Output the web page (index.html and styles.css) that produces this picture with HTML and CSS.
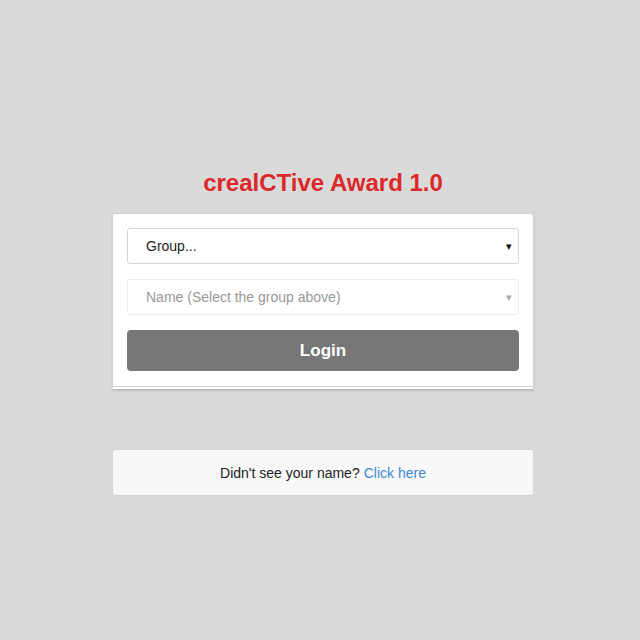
FILE: index.html
```html
<!DOCTYPE html>
<html>
<head>
<meta charset="utf-8">
<link rel="stylesheet" href="styles.css">
</head>
<body>
<div class="page">
  <h1 class="title">crealCTive Award 1.0</h1>
  <form class="card">
    <div class="fields">
      <div class="select">
        <span>Group...</span>
        <span class="arrow">&#9662;</span>
      </div>
      <div class="select disabled">
        <span>Name (Select the group above)</span>
        <span class="arrow">&#9662;</span>
      </div>
      <button type="button" class="login">Login</button>
    </div>
    <div class="card-foot"></div>
  </form>
  <div class="note">Didn't see your name? <a href="#">Click here</a></div>
</div>
</body>
</html>
```
FILE: styles.css
```css
html, body {
  margin: 0;
  padding: 0;
  background: #dadada;
  font-family: "Liberation Sans", Arial, sans-serif;
}
.page {
  width: 422px;
  margin-left: 112px;
  padding-top: 169px;
  display: flex;
  flex-direction: column;
}
.title {
  margin: 0 0 16px;
  text-align: center;
  color: #dc2828;
  font-size: 24px;
  line-height: 28px;
  font-weight: bold;
}
.card {
  background: #fff;
  border: 1px solid #d2d2d2;
  border-bottom: none;
  border-radius: 3px 3px 0 0;
  box-shadow: 0 2px 2px rgba(0,0,0,0.14);
}
.fields {
  padding: 14px 14px 15px;
  display: flex;
  flex-direction: column;
  gap: 15px;
}
.select {
  height: 36px;
  box-sizing: border-box;
  border: 1px solid #d6d6d6;
  border-radius: 3px;
  display: flex;
  align-items: center;
  justify-content: space-between;
  padding: 0 6px 0 18px;
  font-size: 14px;
  color: #222;
}
.select.disabled {
  border-color: #ececec;
  color: #999;
}
.arrow {
  font-size: 11px;
  color: #111;
}
.disabled .arrow {
  color: #aaa;
}
.login {
  height: 41px;
  border: none;
  border-radius: 4px;
  background: #777777;
  color: #fff;
  font-family: "Liberation Sans", Arial, sans-serif;
  font-size: 17px;
  font-weight: bold;
  padding: 0;
}
.card-foot {
  height: 2px;
  border-top: 1px solid #d4d4d4;
  background: #fff;
}
.note {
  margin-top: 60px;
  height: 47px;
  box-sizing: border-box;
  background: #f8f8f8;
  border: 1px solid #d4d4d4;
  border-radius: 3px;
  display: flex;
  align-items: center;
  justify-content: center;
  font-size: 14px;
  color: #222;
}
.note a {
  color: #3f88d0;
  text-decoration: none;
  margin-left: 4px;
}
```
